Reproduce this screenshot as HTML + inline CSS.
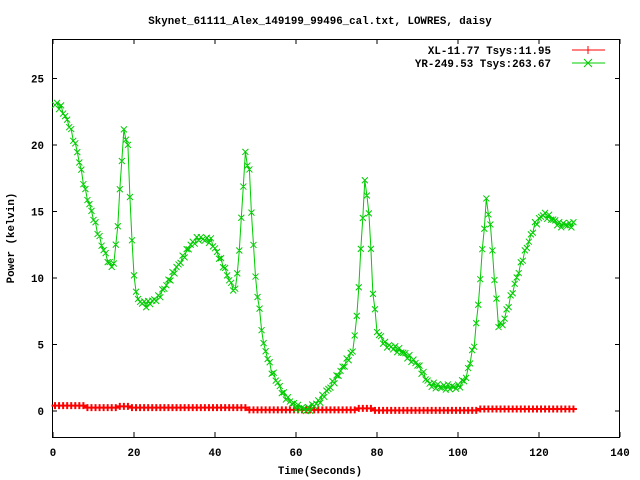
<!DOCTYPE html><html><head><style>body{margin:0;background:#fff}svg{display:block}text{font-family:"Liberation Mono",monospace;font-weight:bold;font-size:10.8px;fill:#000}</style></head><body>
<svg id="s" width="640" height="480" xmlns="http://www.w3.org/2000/svg">
<rect x="0" y="0" width="640" height="480" fill="#fff"/>
<text x="320" y="24" text-anchor="middle">Skynet_61111_Alex_149199_99496_cal.txt, LOWRES, daisy</text>
<text x="320" y="474" text-anchor="middle">Time(Seconds)</text>
<text transform="translate(14,238) rotate(-90)" text-anchor="middle">Power (kelvin)</text>
<g id="ax"></g>
<rect x="52.5" y="39.5" width="567" height="398" fill="none" stroke="#000"/>
<text x="551" y="54" text-anchor="end">XL-11.77 Tsys:11.95</text>
<text x="551" y="67" text-anchor="end">YR-249.53 Tsys:263.67</text>
<line x1="572" y1="50" x2="605" y2="50" stroke="#f00"/><line x1="588" y1="46" x2="588" y2="54" stroke="#f00"/>
<line x1="572" y1="63" x2="605" y2="63" stroke="#0c0"/><path d="M584 59l8 8M584 67l8-8" stroke="#0c0"/>
<g id="g"></g>
</svg>
<script>
var NS="http://www.w3.org/2000/svg";
function X(t){return 53+t*4.05}function Y(v){return 411-v*13.3}
function el(p,n,a){var e=document.createElementNS(NS,n);for(var k in a)e.setAttribute(k,a[k]);p.appendChild(e);return e}
var ax=document.getElementById('ax');
for(var i=0;i<=140;i+=20){var x=X(i);el(ax,'line',{x1:x,y1:437,x2:x,y2:432,stroke:'#000'});el(ax,'line',{x1:x,y1:39,x2:x,y2:44,stroke:'#000'});var t=el(ax,'text',{x:x,y:456,'text-anchor':'middle'});t.textContent=i;}
for(var v=0;v<=25;v+=5){var y=Y(v);el(ax,'line',{x1:52,y1:y,x2:57,y2:y,stroke:'#000'});el(ax,'line',{x1:620,y1:y,x2:615,y2:y,stroke:'#000'});var t=el(ax,'text',{x:44,y:y+4,'text-anchor':'end'});t.textContent=v;}
var G=[[0,23.2],[2,22.8],[4,21.5],[6,19.5],[8,16.5],[10,14.5],[12,12.5],[14,11],[15,11],[16,14],[17,19],[17.5,21],[18.5,20],[19,16],[20,10],[21,8.3],[23,8],[26,8.5],[30,10.5],[34,12.5],[36,13],[39,12.8],[42,11],[44,9.5],[45,9],[46,12],[47,17],[47.5,19.3],[48.5,18],[49,15],[50,10],[52,5],[54,3],[57,1.2],[60,0.3],[63,0.1],[66,0.8],[70,2.5],[74,4.5],[75,7],[76,12],[77,17.3],[78,15],[79,9],[80,6],[82,5],[86,4.5],[90,3.5],[93,2],[96,1.8],[100,1.8],[102,2.5],[104,5],[105,8],[106,12],[107,15.8],[108,14],[109,10],[110,6.5],[111,6.5],[113,8.5],[116,11.5],[119,14],[121,14.8],[123,14.5],[125,14],[128,14]];
function f(t){for(var i=0;i<G.length-1;i++){if(t<=G[i+1][0]){var a=G[i],b=G[i+1];return a[1]+(b[1]-a[1])*(t-a[0])/(b[0]-a[0])}}return 14}
function r(t){if(t<8)return 0.4;if(t<16)return 0.25;if(t<19)return 0.35;if(t<48)return 0.25;if(t<75)return 0.08;if(t<79)return 0.2;if(t<105)return 0.05;return 0.15}
var g=document.getElementById('g');
var rp="",gp="",gm="",rm="",k=0;
for(var t=0.5;t<=128.5;t+=0.5){var x=X(t),yr=Y(r(t)),yg=Y(f(t)+Math.sin(t*7.3)*0.2);
rp+=(t==0.5?"M":"L")+x.toFixed(1)+" "+yr.toFixed(1);gp+=(t==0.5?"M":"L")+x.toFixed(1)+" "+yg.toFixed(1);
if(k++%2==0)rm+="M"+(x-3.5)+" "+yr+"h7M"+x+" "+(yr-3.5)+"v7";gm+="M"+(x-3)+" "+(yg-3)+"l6 6M"+(x-3)+" "+(yg+3)+"l6-6";}
el(g,'path',{d:rp,stroke:'#f00',fill:'none'});el(g,'path',{d:rm,stroke:'#f00','stroke-width':2,fill:'none'});
el(g,'path',{d:gp,stroke:'#0c0',fill:'none'});el(g,'path',{d:gm,stroke:'#0c0',fill:'none'});
</script>
</body></html>
